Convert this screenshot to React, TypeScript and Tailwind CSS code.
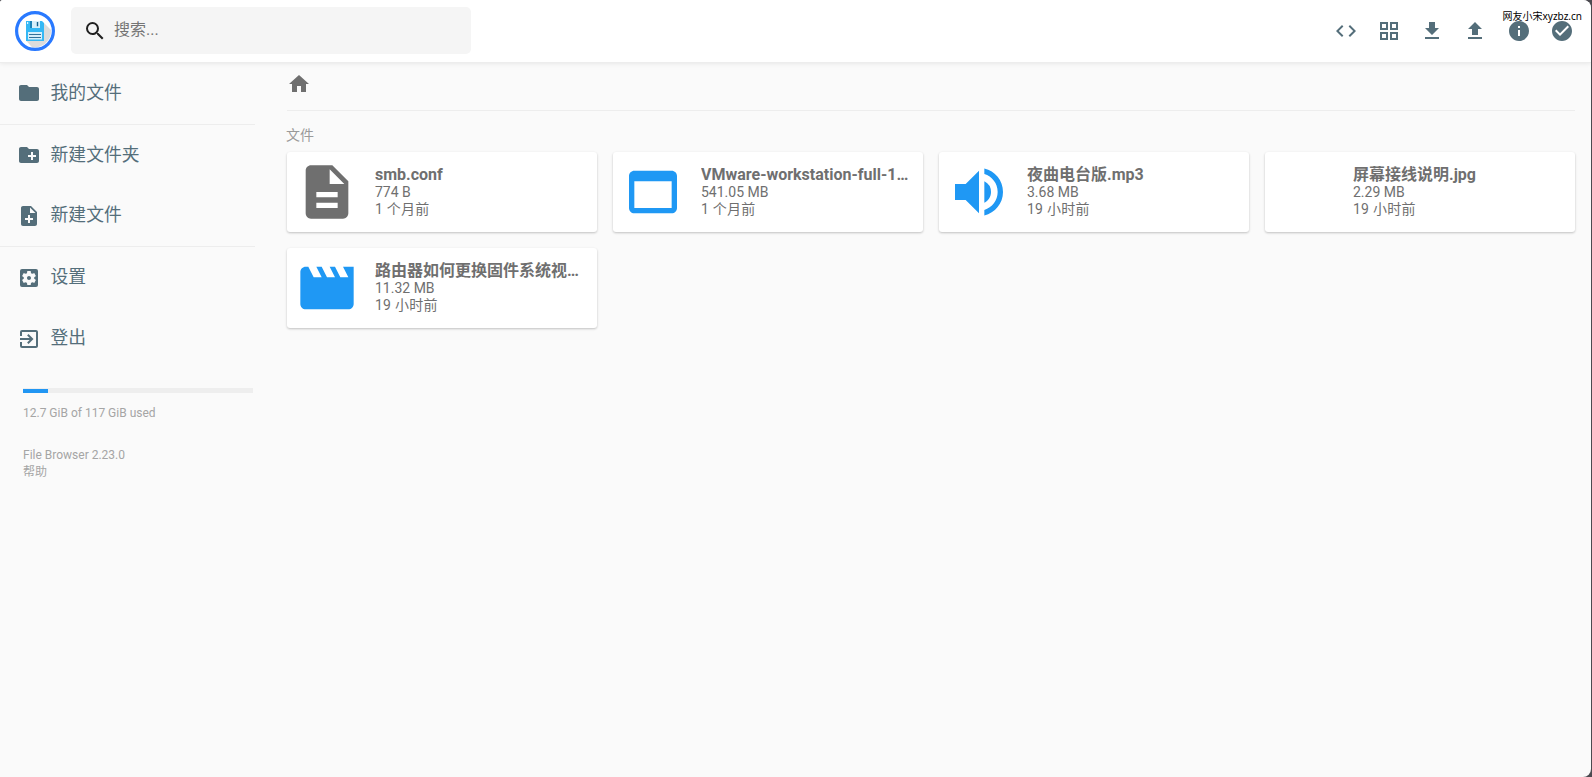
import type { ReactNode } from 'react';
import type { IconType } from 'react-icons';
import {
  MdCheckCircle,
  MdCode,
  MdCreateNewFolder,
  MdDescription,
  MdExitToApp,
  MdFileDownload,
  MdFileUpload,
  MdFolder,
  MdGridView,
  MdHome,
  MdInfo,
  MdMovie,
  MdNoteAdd,
  MdSearch,
  MdSettingsApplications,
  MdVolumeUp
} from 'react-icons/md';

type FileItem = {
  name: string;
  size: string;
  modified: string;
  icon?: IconType;
  color?: string;
};

const WindowIcon: IconType = ({ className }) => (
  <svg viewBox="0 0 24 24" fill="currentColor" className={className}>
    <path d="M19 4H5c-1.11 0-2 .9-2 2v12c0 1.1.89 2 2 2h14c1.1 0 2-.9 2-2V6c0-1.1-.89-2-2-2zm0 14H5V8h14v10z" />
  </svg>
);

const files: FileItem[] = [
  { name: 'smb.conf', size: '774 B', modified: '1 个月前', icon: MdDescription, color: 'text-[#6f6f6f]' },
  { name: 'VMware-workstation-full-1…', size: '541.05 MB', modified: '1 个月前', icon: WindowIcon, color: 'text-[#1f98f4]' },
  { name: '夜曲电台版.mp3', size: '3.68 MB', modified: '19 小时前', icon: MdVolumeUp, color: 'text-[#1f98f4]' },
  { name: '屏幕接线说明.jpg', size: '2.29 MB', modified: '19 小时前' },
  { name: '路由器如何更换固件系统视…', size: '11.32 MB', modified: '19 小时前', icon: MdMovie, color: 'text-[#1f98f4]' }
];

const headerActions = [MdCode, MdGridView, MdFileDownload, MdFileUpload, MdInfo, MdCheckCircle];

const Logo = () => (
  <svg viewBox="0 0 40 40" className="h-10 w-10 shrink-0">
    <circle cx="20" cy="20" r="18.5" fill="#fff" />
    <path d="M29 12 36 19a16.5 16.5 0 0 1-19 17.3L11.5 30z" fill="#dcdcdc" />
    <circle cx="20" cy="20" r="18.4" fill="none" stroke="#2979ff" strokeWidth="3.2" />
    <path d="M11 10h16l2 2v18H11z" fill="#35b8f5" />
    <path d="M12 11h1.2v2H12z" fill="#e1f5fe" />
    <path d="M15 10h10v7H15z" fill="#d7effa" />
    <path d="M15 10h2v7h-2z" fill="#1d83b8" />
    <path d="M21.8 11h1.4v4.2h-1.4z" fill="#14608c" />
    <path d="M13 21h14v7.5H13z" fill="#d7effa" />
    <path d="M14 23h12v1H14zM14 26h12v1H14z" fill="#35729a" />
  </svg>
);

const SidebarItem = ({ icon: Icon, label }: { icon: IconType; label: string }) => (
  <button className="flex h-[60.8px] w-full items-center pl-[17.2px] text-[17.8px] text-[#546e7a]">
    <Icon className="mr-[9.4px] h-6 w-6" />
    <span className="pb-px leading-6">{label}</span>
  </button>
);

const SidebarGroup = ({ children }: { children: ReactNode }) => (
  <div className="border-b border-black/5">{children}</div>
);

const Header = () => (
  <header className="relative flex h-[63px] shrink-0 items-center border-b border-black/[0.07] bg-white pr-[17.3px] pb-px pl-[15px] shadow-[0_0_5px_rgba(0,0,0,0.1)]">
    <Logo />
    <div className="ml-4 flex h-[47px] w-[400px] items-center rounded-[5px] bg-[#f5f5f5] pl-3">
      <MdSearch className="h-6 w-6 text-[#212121]" />
      <span className="ml-[7px] pb-0.5 text-base text-[#757575]">搜索...</span>
    </div>
    <div className="ml-auto flex gap-[19.2px] text-[#546e7a]">
      {headerActions.map((Icon, i) => (
        <Icon key={i} className="h-6 w-6" />
      ))}
    </div>
    <span className="absolute top-[7px] right-[9px] font-['Noto_Sans','Noto_Sans_CJK_SC',sans-serif] text-[10px] leading-[18px] text-black">
      网友小宋xyzbz.cn
    </span>
  </header>
);

const Sidebar = () => (
  <nav className="w-[255px] shrink-0">
    <SidebarGroup>
      <SidebarItem icon={MdFolder} label="我的文件" />
    </SidebarGroup>
    <SidebarGroup>
      <SidebarItem icon={MdCreateNewFolder} label="新建文件夹" />
      <SidebarItem icon={MdNoteAdd} label="新建文件" />
    </SidebarGroup>
    <SidebarItem icon={MdSettingsApplications} label="设置" />
    <SidebarItem icon={MdExitToApp} label="登出" />

    <div className="mt-[19px] ml-[23px] text-[12px] text-[#a5a5a5]">
      <div className="flex h-[5px] w-[230px] items-end bg-[#eee]">
        <div className="h-1 bg-[#2196f3]" style={{ width: `${(12.7 / 117) * 100}%` }} />
      </div>
      <p className="mt-3 leading-4">12.7 GiB of 117 GiB used</p>
      <p className="mt-[26px] leading-4">File Browser 2.23.0</p>
      <p className="mt-px leading-[17px]">帮助</p>
    </div>
  </nav>
);

const FileCard = ({ file }: { file: FileItem }) => {
  const Icon = file.icon;
  return (
    <div className="flex h-20 items-center rounded-[3px] bg-white p-2 text-[#6f6f6f] shadow-[0_1px_3px_rgba(0,0,0,0.12),0_1px_2px_rgba(0,0,0,0.12)]">
      <div className={`h-16 w-16 shrink-0 ${file.color ?? ''}`}>
        {Icon && <Icon className="h-16 w-16" />}
      </div>
      <div className="ml-4 w-[214px] pb-px">
        <p className="truncate text-base leading-[19px] font-bold">{file.name}</p>
        <p className="text-sm leading-[17px]">{file.size}</p>
        <p className="text-sm leading-[17px] tracking-[0.25px]">{file.modified}</p>
      </div>
    </div>
  );
};

const App = () => (
  <div className="h-[777px] w-[1592px] overflow-hidden bg-[#4b4a50] pr-px font-[Roboto,'Noto_Sans_CJK_SC',sans-serif]">
    <div className="flex h-full flex-col overflow-hidden rounded-tl-[3px] rounded-r-[8px] bg-[#fafafa]">
      <Header />
      <div className="flex flex-1">
        <Sidebar />
        <main className="ml-8 w-[1288px]">
          <div className="flex h-12 items-start border-b border-black/5 pt-[9px]">
            <MdHome className="h-6 w-6 text-[#6f6f6f]" />
          </div>
          <h2 className="mt-3.5 mb-[7px] -ml-px text-sm leading-5 text-[#9a9a9a]">文件</h2>
          <div className="grid grid-cols-4 gap-4">
            {files.map((file) => (
              <FileCard key={file.name} file={file} />
            ))}
          </div>
        </main>
      </div>
    </div>
  </div>
);

export default App;
